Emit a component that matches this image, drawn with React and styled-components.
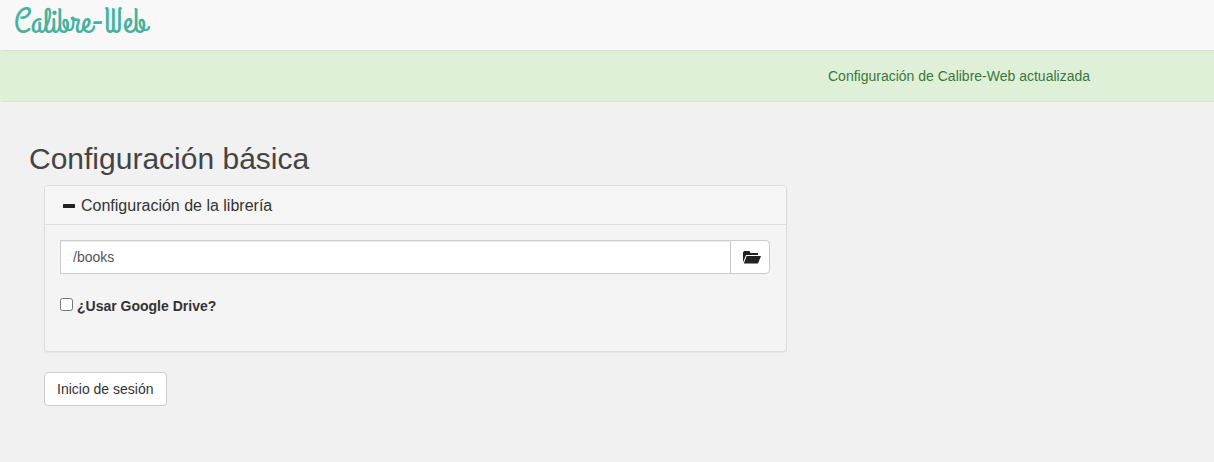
import React from "react";
import styled, { createGlobalStyle } from "styled-components";

const GlobalStyle = createGlobalStyle`
  html, body {
    margin: 0;
    padding: 0;
    min-height: 100%;
    background-color: #f1f1f1;
    color: #333;
    font-family: "Liberation Sans", Arial, sans-serif;
    font-size: 14px;
    line-height: 20px;
  }
  * {
    box-sizing: border-box;
  }
`;

const Navbar = styled.nav`
  display: flex;
  align-items: center;
  height: 50px;
  padding: 0 14px;
  background-color: #f8f8f8;
`;

const Brand = styled.a`
  margin-top: -4px;
  color: #45b29d;
  font-family: "Grand Hotel", "Liberation Serif", cursive;
  font-size: 35px;
  line-height: 36px;
`;

const Alert = styled.div`
  height: 52px;
  padding: 15px 0 0 828px;
  background-color: #dff0d8;
  border-top: 1px solid #d6e9c6;
  border-bottom: 1px solid #d6e9c6;
  border-radius: 3px 0 0 3px;
  color: #3c763d;
`;

const Main = styled.main`
  padding: 40px 29px 0;
`;

const Title = styled.h2`
  margin: 0 0 10px;
  color: #444;
  font-size: 30px;
  font-weight: 400;
  line-height: 33px;
`;

const Form = styled.form`
  width: 743px;
  margin-left: 15px;
`;

const Panel = styled.section`
  height: 167px;
  margin-bottom: 20px;
  background-color: #f4f4f4;
  border: 1px solid #ddd;
  border-radius: 4px;
  box-shadow: 0 1px 1px rgba(0, 0, 0, 0.05);
`;

const PanelHeading = styled.div`
  display: flex;
  align-items: center;
  gap: 6px;
  height: 39px;
  padding: 2px 18px 0;
  background-color: #f5f5f5;
  border-bottom: 1px solid #ddd;
  border-radius: 3px 3px 0 0;
  color: #333;
  font-size: 16px;
`;

const PanelBody = styled.div`
  padding: 15px 16px 15px 15px;
`;

const InputGroup = styled.div`
  display: flex;
  height: 34px;
  margin-bottom: 22px;
`;

const PathInput = styled.input`
  flex: 1;
  min-width: 0;
  padding: 6px 12px;
  background-color: #fff;
  border: 1px solid #ccc;
  border-radius: 0;
  box-shadow: inset 0 1px 1px rgba(0, 0, 0, 0.075);
  color: #555;
  font: inherit;
`;

const AddonButton = styled.button`
  display: flex;
  align-items: center;
  justify-content: center;
  width: 40px;
  margin-left: -1px;
  padding: 0 0 0 3px;
  background-color: #fff;
  border: 1px solid #ccc;
  border-radius: 0 4px 4px 0;
`;

const CheckLabel = styled.label`
  display: flex;
  align-items: center;
  gap: 4px;
  font-weight: 700;
`;

const CheckBox = styled.input`
  width: 13px;
  height: 13px;
  margin: -3px 0 0;
`;

const Button = styled.button`
  height: 34px;
  padding: 6px 12px;
  background-color: #fff;
  border: 1px solid #ccc;
  border-radius: 4px;
  color: #333;
  font: inherit;
`;

function MinusIcon() {
  return (
    <svg width="12" height="4" viewBox="0 0 12 4">
      <rect width="12" height="4" rx="0.5" fill="#222" />
    </svg>
  );
}

function FolderOpenIcon() {
  return (
    <svg width="18" height="14" viewBox="0 0 18 14">
      <path d="M0 2.5 L0 12.5 L3 5 L15 5 L15 3 L7.5 3 L6.5 1 L1 1 Z" fill="#222" />
      <path d="M3.6 6 L18 6 L15 13.5 L0.8 13.5 Z" fill="#222" />
    </svg>
  );
}

export default function App() {
  return (
    <>
      <GlobalStyle />
      <Navbar>
        <Brand>Calibre-Web</Brand>
      </Navbar>
      <Alert>Configuración de Calibre-Web actualizada</Alert>
      <Main>
        <Title>Configuración básica</Title>
        <Form>
          <Panel>
            <PanelHeading>
              <MinusIcon />
              Configuración de la librería
            </PanelHeading>
            <PanelBody>
              <InputGroup>
                <PathInput defaultValue="/books" />
                <AddonButton type="button">
                  <FolderOpenIcon />
                </AddonButton>
              </InputGroup>
              <CheckLabel>
                <CheckBox type="checkbox" />
                ¿Usar Google Drive?
              </CheckLabel>
            </PanelBody>
          </Panel>
          <Button type="button">Inicio de sesión</Button>
        </Form>
      </Main>
    </>
  );
}
